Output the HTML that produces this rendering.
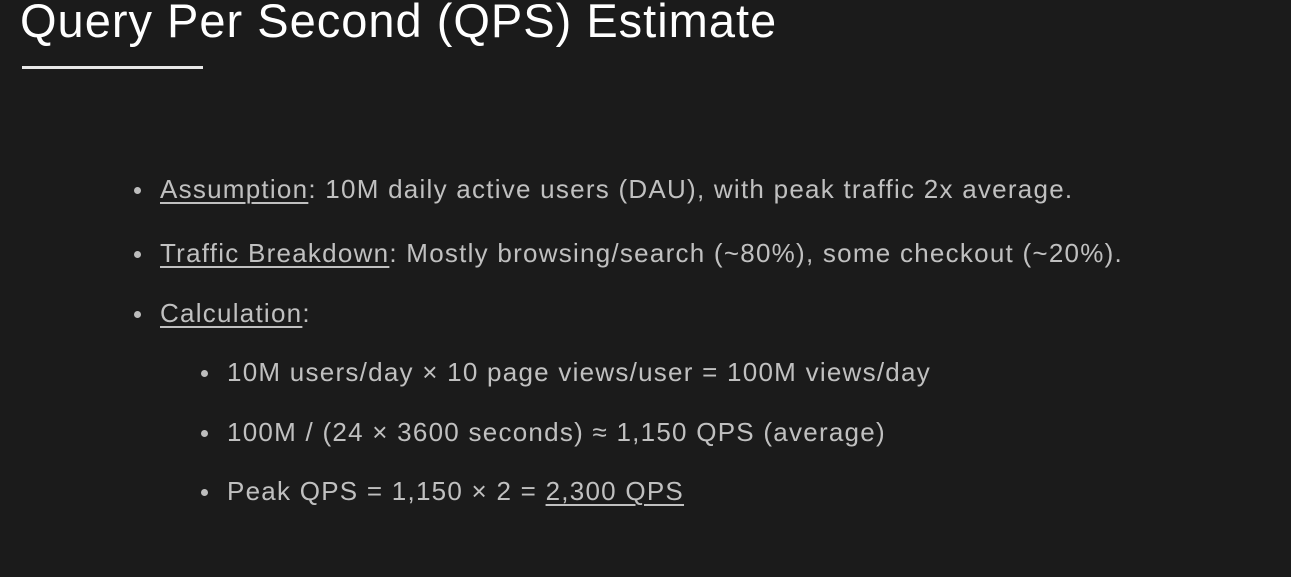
<!DOCTYPE html>
<html><head><style>
body{margin:0;width:1291px;height:577px;background:#1b1b1b;overflow:hidden;font-family:"Liberation Sans",sans-serif;position:relative}
.t{position:absolute;left:20px;top:-7px;font-size:47px;color:#fff;white-space:nowrap;letter-spacing:1px}
.hr{position:absolute;left:22px;top:66px;width:181px;height:3px;background:#e8e8e8}
.l{position:absolute;font-size:26px;color:#c0c0c0;white-space:nowrap;line-height:30px;letter-spacing:1.25px}
.l u{text-decoration:underline;text-underline-offset:4px;text-decoration-thickness:1.5px}
.b{position:absolute;width:7px;height:7px;border-radius:50%;background:#bdbdbd}
</style></head><body>
<div class="t">Query Per Second (QPS) Estimate</div>
<div class="hr"></div>
<div class="b" style="left:134px;top:187px"></div>
<div class="l" style="left:160px;top:174px"><u>Assumption</u>: 10M daily active users (DAU), with peak traffic 2x average.</div>
<div class="b" style="left:134px;top:251px"></div>
<div class="l" style="left:160px;top:238px"><u>Traffic Breakdown</u>: Mostly browsing/search (~80%), some checkout (~20%).</div>
<div class="b" style="left:134px;top:311px"></div>
<div class="l" style="left:160px;top:298px"><u>Calculation</u>:</div>
<div class="b" style="left:201px;top:370px"></div>
<div class="l" style="left:227px;top:357px">10M users/day × 10 page views/user = 100M views/day</div>
<div class="b" style="left:201px;top:430px"></div>
<div class="l" style="left:227px;top:417px">100M / (24 × 3600 seconds) ≈ 1,150 QPS (average)</div>
<div class="b" style="left:201px;top:489px"></div>
<div class="l" style="left:227px;top:476px">Peak QPS = 1,150 × 2 = <u>2,300 QPS</u></div>
</body></html>
